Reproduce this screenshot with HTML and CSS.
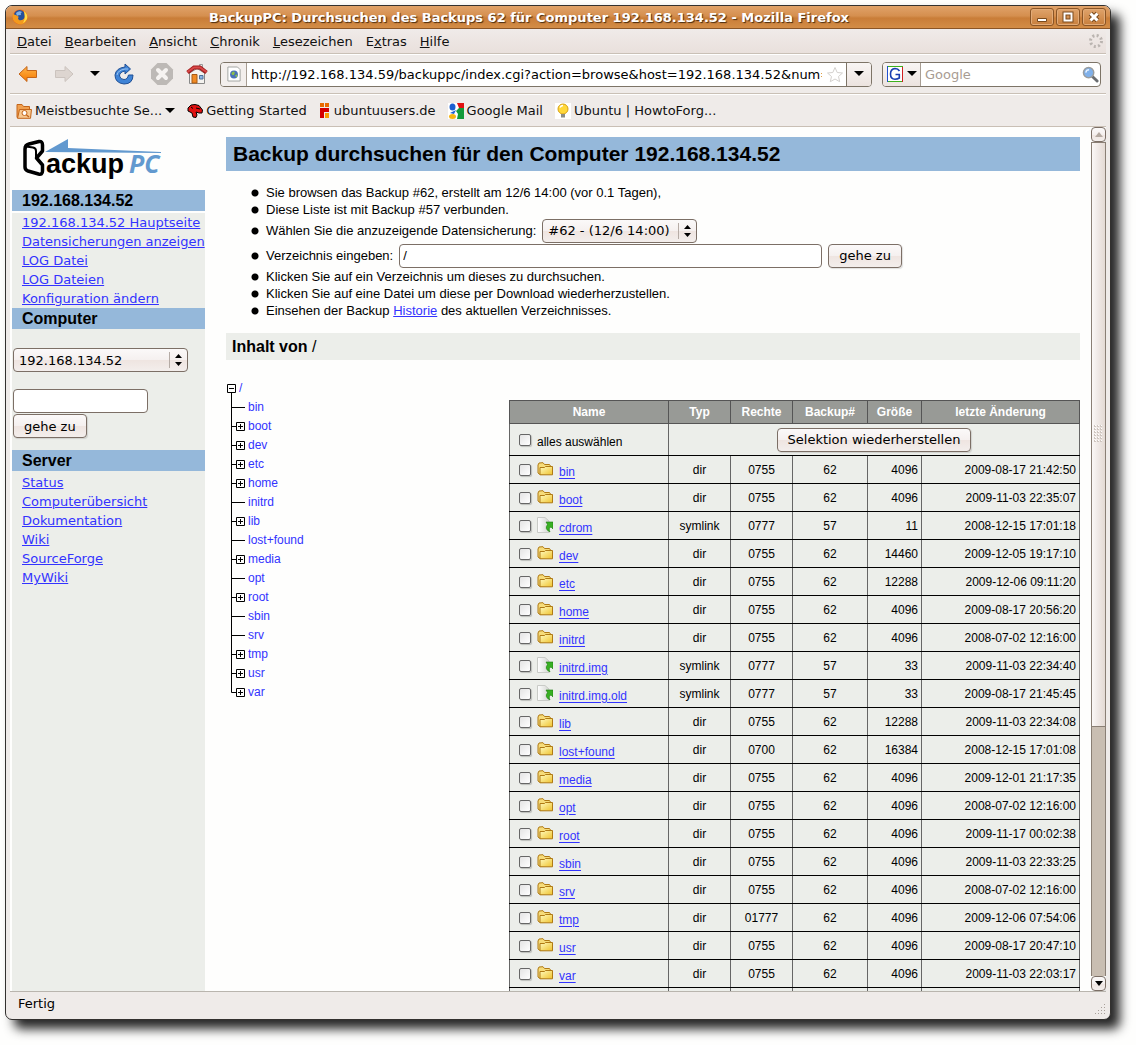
FILE: index.html
```html
<!DOCTYPE html>
<html lang="de">
<head>
    <meta charset="UTF-8">
    <meta name="viewport" content="width=device-width, initial-scale=1.0">
    <title>BackupPC: Durchsuchen des Backups 62 für Computer 192.168.134.52</title>
    <link rel="stylesheet" href="styles.css">
</head>
<body>

    <!-- shared icons -->
    <svg class="sprite" width="0" height="0" aria-hidden="true">
        <defs>
            <linearGradient id="gold" x1="0" y1="0" x2="1" y2="1">
                <stop offset="0" stop-color="#fffbc0"/>
                <stop offset="1" stop-color="#efc22c"/>
            </linearGradient>
            <linearGradient id="orange" x1="0" y1="0" x2="0" y2="1">
                <stop offset="0" stop-color="#ffb54a"/>
                <stop offset="1" stop-color="#f57900"/>
            </linearGradient>
            <linearGradient id="page" x1="0" y1="0" x2="1" y2="0">
                <stop offset="0" stop-color="#ffffff"/>
                <stop offset="1" stop-color="#d4d6d2"/>
            </linearGradient>
        </defs>
        <symbol id="folder" viewBox="0 0 16 14">
            <path d="M1 3 L2 1 L6 .7 L7.5 2.5 L12.5 2.5 L13.5 4 L13.5 11 L3 12.5 L1 11Z" fill="#f6dc7a" stroke="#b07a14"/>
            <path d="M3 12.8 L3 5.5 L7.5 5.5 L8.5 4.5 L15.5 4.5 L15.5 12.8Z" fill="url(#gold)" stroke="#b07a14"/>
        </symbol>
        <symbol id="symlink" viewBox="0 0 16 16">
            <path d="M.5 .5 H8 L12 4 V15.5 H.5Z" fill="url(#page)" stroke="#c9cbc7"/>
            <path d="M9 5 H16 V12 L14 10 Q11 11 13 15 Q7 12 10.5 7.5Z" fill="#38b022" stroke="#1c7a10" stroke-width=".6"/>
        </symbol>
        <symbol id="leaf" viewBox="0 0 21 19">
            <path d="M5.5 0 V19 M5 9.5 H19" stroke="#000" fill="none"/>
        </symbol>
        <symbol id="plus" viewBox="0 0 21 19">
            <path d="M5.5 0 V19 M5 9.5 H10" stroke="#000" fill="none"/>
            <path d="M10.500 5.500 H18.500 V13.500 H10.500Z M12 9.500 H17 M14.500 7 V12" stroke="#000" fill="none"/>
        </symbol>
        <symbol id="plus-last" viewBox="0 0 21 19">
            <path d="M5.5 0 V9.500 H10" stroke="#000" fill="none"/>
            <path d="M10.500 5.500 H18.500 V13.500 H10.500Z M12 9.500 H17 M14.500 7 V12" stroke="#000" fill="none"/>
        </symbol>
        <symbol id="minus" viewBox="0 0 12 19">
            <path d="M1.500 5.500 H9.500 V13.500 H1.500Z M3 9.500 H8 M5.500 14 V19" stroke="#000" fill="none"/>
        </symbol>
        <symbol id="caret" viewBox="0 0 10 6">
            <path d="M0 0 H10 L5 5Z" fill="#000"/>
        </symbol>
    </svg>

    <div class="window">
        <header class="titlebar">
            <svg class="firefox" viewBox="0 0 16 16" width="16" height="16">
                <circle cx="8" cy="8" r="7.500" fill="#e8661a"/>
                <circle cx="7.500" cy="6.500" r="5.500" fill="#24509c"/>
                <path d="M4 4 Q7 1 10 3 Q8 4 9 6 Q6 6 5 7Z" fill="#7fb0e4"/>
                <path d="M1 3 Q1 6 4 6 L7 8 Q5 9 7 11 Q11 12 13 8 Q13 4 11 1 Q16 4 15.500 9 Q14 15 8 15.500 Q1 14 .5 8Z" fill="#f39a1e"/>
                <path d="M12 2 Q16 5 15 10 Q13 13 11 14 Q14 9 12 2Z" fill="#ffdc4a"/>
            </svg>
            <div class="caption">BackupPC: Durchsuchen des Backups 62 für Computer 192.168.134.52 - Mozilla Firefox</div>
            <div class="window-buttons">
                <button aria-label="Minimieren"><svg viewBox="0 0 12 12" width="12" height="12"><path d="M1.500 7.500 H10.500 V10.500 H1.500Z" fill="#fff" stroke="#7a4a1c"/></svg></button>
                <button aria-label="Maximieren"><svg viewBox="0 0 12 12" width="12" height="12"><path d="M2.500 2.500 H9.500 V9.500 H2.500Z" fill="none" stroke="#7a4a1c" stroke-width="4"/><path d="M2.500 2.500 H9.500 V9.500 H2.500Z" fill="none" stroke="#fff" stroke-width="2"/></svg></button>
                <button aria-label="Schließen"><svg viewBox="0 0 12 12" width="12" height="12"><path d="M2.500 2.500 L9.500 9.500 M9.500 2.500 L2.500 9.500" stroke="#7a4a1c" stroke-width="5"/><path d="M2.500 2.500 L9.500 9.500 M9.500 2.500 L2.500 9.500" stroke="#fff" stroke-width="3"/></svg></button>
            </div>
        </header>

        <nav class="menubar">
            <a href="#"><u>D</u>atei</a>
            <a href="#"><u>B</u>earbeiten</a>
            <a href="#"><u>A</u>nsicht</a>
            <a href="#"><u>C</u>hronik</a>
            <a href="#"><u>L</u>esezeichen</a>
            <a href="#">E<u>x</u>tras</a>
            <a href="#"><u>H</u>ilfe</a>
            <svg class="throbber" viewBox="0 0 14 14" width="14" height="14">
                <circle cx="7" cy="7" r="5.500" fill="none" stroke="#bab4b0" stroke-width="3" stroke-dasharray="2 2.320"/>
            </svg>
        </nav>

        <div class="toolbar">
            <button class="tool" aria-label="Zurück"><svg viewBox="0 0 20 18" width="20" height="18"><path d="M1 9 L9 1.500 V5.500 H18.500 V12.500 H9 V16.500Z" fill="url(#orange)" stroke="#c4651a" stroke-linejoin="round"/></svg></button>
            <button class="tool" aria-label="Vor"><svg viewBox="0 0 20 18" width="20" height="18"><path d="M19 9 L11 1.500 V5.500 H1.500 V12.500 H11 V16.500Z" fill="#ddd5d0" stroke="#cbc3be" stroke-linejoin="round"/></svg></button>
            <button class="tool drop" aria-label="Verlauf"><svg width="10" height="6"><use href="#caret"/></svg></button>
            <button class="tool" aria-label="Neu laden"><svg viewBox="0 0 20 22" width="20" height="22"><path d="M11 1 L16.500 6 L11 11 V8 Q5.500 9 5.500 13 Q6.500 16.500 10 16.500 Q13.500 16.500 14.500 12 L19 12 Q19 21 10 21 Q1 20 1 12 Q2 5 11 4Z" fill="#3f83d6" stroke="#1f4f94" stroke-linejoin="round"/><path d="M3 12 Q4 7 11 6 L14 6" fill="none" stroke="#9cc4f0"/></svg></button>
            <button class="tool" aria-label="Stopp"><svg viewBox="0 0 24 24" width="24" height="24"><path d="M7.500 1 H16.500 L23 7.500 V16.500 L16.500 23 H7.500 L1 16.500 V7.500Z" fill="#bdb9b6"/><path d="M8 8 L16 16 M16 8 L8 16" stroke="#f6f3f1" stroke-width="4" stroke-linecap="round"/></svg></button>
            <button class="tool" aria-label="Startseite"><svg viewBox="0 0 22 22" width="22" height="22"><path d="M13.500 1.500 H16.500 V7 H13.500Z" fill="#eee" stroke="#999"/><path d="M3.500 10 L11 5.500 L18.500 10 V20.500 H3.500Z" fill="#f4f2ef" stroke="#888"/><path d="M6 11.500 H11 V20 H6Z" fill="#f08a24" stroke="#a85a14"/><path d="M13.500 12.500 H17 V16 H13.500Z" fill="#8ab6e6" stroke="#4d6f99"/><path d="M1.500 9.500 L8 4.500 H14 L20.500 9.500" fill="none" stroke="#a01c1c" stroke-width="4"/><path d="M1.500 9 L8 4.500 H14 L20.500 9" fill="none" stroke="#d84848" stroke-width="2"/></svg></button>

            <div class="urlbox">
                <span class="site-icon"><svg viewBox="0 0 16 18" width="14" height="16"><path d="M1 1 H12 L15 4 V17 H1Z" fill="#fff" stroke="#999c98"/><circle cx="8" cy="9.500" r="4.500" fill="#4a72b8"/><path d="M5 8 Q7 5 9 7 L8 10 L6 10Z M9 11 L12 9 L11 13Z" fill="#8cbf4a"/></svg></span>
                <input type="text" aria-label="Adresse" value="http://192.168.134.59/backuppc/index.cgi?action=browse&amp;host=192.168.134.52&amp;num=62&amp;share=/">
                <svg class="star" viewBox="0 0 18 17" width="18" height="17"><path d="M9 1.500 L11.200 6.500 L16.500 7 L12.500 10.500 L13.700 15.700 L9 13 L4.300 15.700 L5.500 10.500 L1.500 7 L6.800 6.500Z" fill="#fff" stroke="#d3d0cd"/></svg>
                <button aria-label="Adressliste"><svg width="10" height="6"><use href="#caret"/></svg></button>
            </div>

            <div class="searchbox">
                <button aria-label="Suchmaschine">
                    <svg viewBox="0 0 16 16" width="16" height="16"><path d="M0 0 H16 V16 H0Z" fill="#fff"/><path d="M0 .5 H16 M0 15.500 H15" stroke="#3cb01c"/><path d="M.5 0 V16" stroke="#2050d0"/><path d="M15.500 1 V16" stroke="#d02020"/><path d="M12.500 5 Q11 2.500 8 2.500 Q3.500 3 3.500 8 Q3.500 13 8 13.300 Q10.500 13.300 12.300 12 V8.500 H8.500" fill="none" stroke="#1a3fb0" stroke-width="1.600"/></svg>
                    <svg width="10" height="6"><use href="#caret"/></svg>
                </button>
                <input type="text" aria-label="Suche" placeholder="Google">
                <svg class="glass" viewBox="0 0 18 18" width="17" height="17"><path d="M11 11 L16 16" stroke="#6a6d70" stroke-width="3" stroke-linecap="round"/><circle cx="7" cy="7" r="5.500" fill="#7fb0ea" stroke="#9a9d9f" stroke-width="1.500"/><path d="M4 7 Q4.500 4 7.500 4" fill="none" stroke="#e4f0ff" stroke-width="1.500"/></svg>
            </div>
        </div>

        <nav class="bookmarks">
            <a href="#">
                <svg viewBox="0 0 16 16" width="16" height="16"><path d="M1 1.500 H6 L7.500 3.500 H13.500 V14.500 H1Z" fill="#f0a050" stroke="#c4651a"/><path d="M3.500 6.500 H15.500 L14.500 15.300 H1.500Z" fill="#f8c890" stroke="#c4651a"/><circle cx="8.500" cy="10" r="2.500" fill="#fff" stroke="#c4651a"/><path d="M10.500 12 L13 14" stroke="#c4651a" stroke-width="1.500"/></svg>
                Meistbesuchte Se...
                <svg width="10" height="6"><use href="#caret"/></svg>
            </a>
            <a href="#">
                <svg viewBox="0 0 16 14" width="16" height="14"><path d="M1 4 L4 1 L8 .5 L12 1.500 L15.500 6 L15 9 L12 9 L9 8 L10 11 L9 13.500 L6 13 L5 9 L1 7Z" fill="#e01010" stroke="#000"/><path d="M4 3 L6 4.500 M9 4 L13 5" stroke="#000"/></svg>
                Getting Started
            </a>
            <a href="#">
                <svg viewBox="0 0 12 16" width="12" height="16"><path d="M1 0 H5 V4 H1Z M6 0 H10 V4 H6Z" fill="#e96a00"/><path d="M1 5 H10 V9 H5 V15 H1Z" fill="#d40000"/><path d="M6 10 H10 V15 H6Z" fill="#f99b00"/></svg>
                ubuntuusers.de
            </a>
            <a href="#">
                <svg viewBox="0 0 16 16" width="16" height="16"><path d="M0 0 H16 V16 H0Z" fill="#fff"/><path d="M9 0 H16 V5 H11Z" fill="#e01010"/><path d="M11 5 H16 V16 H9 L10 11 L8 8Z" fill="#129a3a"/><ellipse cx="4.500" cy="4" rx="3" ry="3.500" fill="#1c5fd0"/><path d="M2 10 L8 7 L6 11Z" fill="#1c5fd0"/><ellipse cx="4.500" cy="13.500" rx="3.500" ry="2.500" fill="#f7b512"/></svg>
                Google Mail
            </a>
            <a href="#">
                <svg viewBox="0 0 16 16" width="16" height="16"><path d="M0 0 H16 V16 H0Z" fill="#fff"/><circle cx="8" cy="6" r="5" fill="#ffd83a" stroke="#d8a012"/><path d="M5 4.500 Q6 2.500 8 2.500" fill="none" stroke="#fff" stroke-width="1.500"/><path d="M6 11 H10 V14.500 H6Z" fill="#8a8c88"/></svg>
                Ubuntu | HowtoForg...
            </a>
        </nav>

        <div class="viewport">
            <aside class="sidebar">
                <svg class="logo" viewBox="0 0 142 44" width="142" height="44" role="img" aria-label="BackupPC">
                    <path d="M23 15 L46 2 V11 L139 15 V16Z" fill="#6299cf"/>
                    <path d="M3 30 V12 Q3 8 7 7 L17 4.500 Q20.500 4 20.500 8 V14 L14.500 21 L20.500 28 V34 Q20.500 38 16.500 37 L6 34 Q3 33 3 30Z" fill="#fff" stroke="#000" stroke-width="3.500" stroke-linejoin="round"/>
                    <path d="M4 9.500 L11 10.500 Q14 11 14 14 V21" fill="none" stroke="#000" stroke-width="2"/>
                    <text x="24" y="36" class="logo-ackup">ackup</text>
                    <text x="107" y="36" class="logo-pc">PC</text>
                </svg>
                <h2 class="host">192.168.134.52</h2>
                <div class="panel">
                    <ul class="links">
                        <li><a href="#">192.168.134.52 Hauptseite</a></li>
                        <li><a href="#">Datensicherungen anzeigen</a></li>
                        <li><a href="#">LOG Datei</a></li>
                        <li><a href="#">LOG Dateien</a></li>
                        <li><a href="#">Konfiguration ändern</a></li>
                    </ul>
                    <h2>Computer</h2>
                    <form class="host-form">
                        <select aria-label="Computer">
                            <option>192.168.134.52</option>
                        </select>
                        <input type="text" aria-label="Computername">
                        <button type="button">gehe zu</button>
                    </form>
                    <h2>Server</h2>
                    <ul class="links">
                        <li><a href="#">Status</a></li>
                        <li><a href="#">Computerübersicht</a></li>
                        <li><a href="#">Dokumentation</a></li>
                        <li><a href="#">Wiki</a></li>
                        <li><a href="#">SourceForge</a></li>
                        <li><a href="#">MyWiki</a></li>
                    </ul>
                </div>
            </aside>

            <main class="content">
                <h1>Backup durchsuchen für den Computer 192.168.134.52</h1>

                <ul class="notes">
                    <li>Sie browsen das Backup #62, erstellt am 12/6 14:00 (vor 0.1 Tagen),</li>
                    <li>Diese Liste ist mit Backup #57 verbunden.</li>
                    <li class="field">
                        <label for="backup">Wählen Sie die anzuzeigende Datensicherung:</label>
                        <select id="backup">
                            <option>#62 - (12/6 14:00)</option>
                        </select>
                    </li>
                    <li class="field">
                        <label for="dir">Verzeichnis eingeben:</label>
                        <input type="text" id="dir" value="/">
                        <button type="button">gehe zu</button>
                    </li>
                    <li>Klicken Sie auf ein Verzeichnis um dieses zu durchsuchen.</li>
                    <li>Klicken Sie auf eine Datei um diese per Download wiederherzustellen.</li>
                    <li>Einsehen der Backup <a href="#">Historie</a> des aktuellen Verzeichnisses.</li>
                </ul>

                <h3>Inhalt von <span>/</span></h3>

                <div class="browser">
                    <ul class="tree">
                        <li><svg width="12" height="19"><use href="#minus"/></svg><a href="#">/</a></li>
                        <li><svg width="21" height="19"><use href="#leaf"/></svg><a href="#">bin</a></li>
                        <li><svg width="21" height="19"><use href="#plus"/></svg><a href="#">boot</a></li>
                        <li><svg width="21" height="19"><use href="#plus"/></svg><a href="#">dev</a></li>
                        <li><svg width="21" height="19"><use href="#plus"/></svg><a href="#">etc</a></li>
                        <li><svg width="21" height="19"><use href="#plus"/></svg><a href="#">home</a></li>
                        <li><svg width="21" height="19"><use href="#leaf"/></svg><a href="#">initrd</a></li>
                        <li><svg width="21" height="19"><use href="#plus"/></svg><a href="#">lib</a></li>
                        <li><svg width="21" height="19"><use href="#leaf"/></svg><a href="#">lost+found</a></li>
                        <li><svg width="21" height="19"><use href="#plus"/></svg><a href="#">media</a></li>
                        <li><svg width="21" height="19"><use href="#leaf"/></svg><a href="#">opt</a></li>
                        <li><svg width="21" height="19"><use href="#plus"/></svg><a href="#">root</a></li>
                        <li><svg width="21" height="19"><use href="#leaf"/></svg><a href="#">sbin</a></li>
                        <li><svg width="21" height="19"><use href="#leaf"/></svg><a href="#">srv</a></li>
                        <li><svg width="21" height="19"><use href="#plus"/></svg><a href="#">tmp</a></li>
                        <li><svg width="21" height="19"><use href="#plus"/></svg><a href="#">usr</a></li>
                        <li><svg width="21" height="19"><use href="#plus-last"/></svg><a href="#">var</a></li>
                    </ul>

                    <table class="files">
                        <colgroup>
                            <col class="c-name"><col class="c-type"><col class="c-mode"><col class="c-backup"><col class="c-size"><col>
                        </colgroup>
                        <thead>
                            <tr><th>Name</th><th>Typ</th><th>Rechte</th><th>Backup#</th><th>Größe</th><th>letzte Änderung</th></tr>
                        </thead>
                        <tbody>
                            <tr class="all">
                                <td><div class="entry"><input type="checkbox" id="all"><label for="all">alles auswählen</label></div></td>
                                <td colspan="5"><button type="button">Selektion wiederherstellen</button></td>
                            </tr>
                            <tr><td><div class="entry"><input type="checkbox" aria-label="bin"><svg width="16" height="14"><use href="#folder"/></svg><a href="#">bin</a></div></td><td>dir</td><td>0755</td><td>62</td><td>4096</td><td>2009-08-17 21:42:50</td></tr>
                            <tr><td><div class="entry"><input type="checkbox" aria-label="boot"><svg width="16" height="14"><use href="#folder"/></svg><a href="#">boot</a></div></td><td>dir</td><td>0755</td><td>62</td><td>4096</td><td>2009-11-03 22:35:07</td></tr>
                            <tr><td><div class="entry"><input type="checkbox" aria-label="cdrom"><svg width="16" height="16"><use href="#symlink"/></svg><a href="#">cdrom</a></div></td><td>symlink</td><td>0777</td><td>57</td><td>11</td><td>2008-12-15 17:01:18</td></tr>
                            <tr><td><div class="entry"><input type="checkbox" aria-label="dev"><svg width="16" height="14"><use href="#folder"/></svg><a href="#">dev</a></div></td><td>dir</td><td>0755</td><td>62</td><td>14460</td><td>2009-12-05 19:17:10</td></tr>
                            <tr><td><div class="entry"><input type="checkbox" aria-label="etc"><svg width="16" height="14"><use href="#folder"/></svg><a href="#">etc</a></div></td><td>dir</td><td>0755</td><td>62</td><td>12288</td><td>2009-12-06 09:11:20</td></tr>
                            <tr><td><div class="entry"><input type="checkbox" aria-label="home"><svg width="16" height="14"><use href="#folder"/></svg><a href="#">home</a></div></td><td>dir</td><td>0755</td><td>62</td><td>4096</td><td>2009-08-17 20:56:20</td></tr>
                            <tr><td><div class="entry"><input type="checkbox" aria-label="initrd"><svg width="16" height="14"><use href="#folder"/></svg><a href="#">initrd</a></div></td><td>dir</td><td>0755</td><td>62</td><td>4096</td><td>2008-07-02 12:16:00</td></tr>
                            <tr><td><div class="entry"><input type="checkbox" aria-label="initrd.img"><svg width="16" height="16"><use href="#symlink"/></svg><a href="#">initrd.img</a></div></td><td>symlink</td><td>0777</td><td>57</td><td>33</td><td>2009-11-03 22:34:40</td></tr>
                            <tr><td><div class="entry"><input type="checkbox" aria-label="initrd.img.old"><svg width="16" height="16"><use href="#symlink"/></svg><a href="#">initrd.img.old</a></div></td><td>symlink</td><td>0777</td><td>57</td><td>33</td><td>2009-08-17 21:45:45</td></tr>
                            <tr><td><div class="entry"><input type="checkbox" aria-label="lib"><svg width="16" height="14"><use href="#folder"/></svg><a href="#">lib</a></div></td><td>dir</td><td>0755</td><td>62</td><td>12288</td><td>2009-11-03 22:34:08</td></tr>
                            <tr><td><div class="entry"><input type="checkbox" aria-label="lost+found"><svg width="16" height="14"><use href="#folder"/></svg><a href="#">lost+found</a></div></td><td>dir</td><td>0700</td><td>62</td><td>16384</td><td>2008-12-15 17:01:08</td></tr>
                            <tr><td><div class="entry"><input type="checkbox" aria-label="media"><svg width="16" height="14"><use href="#folder"/></svg><a href="#">media</a></div></td><td>dir</td><td>0755</td><td>62</td><td>4096</td><td>2009-12-01 21:17:35</td></tr>
                            <tr><td><div class="entry"><input type="checkbox" aria-label="opt"><svg width="16" height="14"><use href="#folder"/></svg><a href="#">opt</a></div></td><td>dir</td><td>0755</td><td>62</td><td>4096</td><td>2008-07-02 12:16:00</td></tr>
                            <tr><td><div class="entry"><input type="checkbox" aria-label="root"><svg width="16" height="14"><use href="#folder"/></svg><a href="#">root</a></div></td><td>dir</td><td>0755</td><td>62</td><td>4096</td><td>2009-11-17 00:02:38</td></tr>
                            <tr><td><div class="entry"><input type="checkbox" aria-label="sbin"><svg width="16" height="14"><use href="#folder"/></svg><a href="#">sbin</a></div></td><td>dir</td><td>0755</td><td>62</td><td>4096</td><td>2009-11-03 22:33:25</td></tr>
                            <tr><td><div class="entry"><input type="checkbox" aria-label="srv"><svg width="16" height="14"><use href="#folder"/></svg><a href="#">srv</a></div></td><td>dir</td><td>0755</td><td>62</td><td>4096</td><td>2008-07-02 12:16:00</td></tr>
                            <tr><td><div class="entry"><input type="checkbox" aria-label="tmp"><svg width="16" height="14"><use href="#folder"/></svg><a href="#">tmp</a></div></td><td>dir</td><td>01777</td><td>62</td><td>4096</td><td>2009-12-06 07:54:06</td></tr>
                            <tr><td><div class="entry"><input type="checkbox" aria-label="usr"><svg width="16" height="14"><use href="#folder"/></svg><a href="#">usr</a></div></td><td>dir</td><td>0755</td><td>62</td><td>4096</td><td>2009-08-17 20:47:10</td></tr>
                            <tr><td><div class="entry"><input type="checkbox" aria-label="var"><svg width="16" height="14"><use href="#folder"/></svg><a href="#">var</a></div></td><td>dir</td><td>0755</td><td>62</td><td>4096</td><td>2009-11-03 22:03:17</td></tr>
                            <tr><td></td><td></td><td></td><td></td><td></td><td></td></tr>
                        </tbody>
                    </table>
                </div>
            </main>

            <div class="scrollbar">
                <button aria-label="Nach oben"><svg viewBox="0 0 8 5" width="8" height="5"><path d="M0 5 H8 L4 0Z" fill="#b5aaa2"/></svg></button>
                <div class="thumb">
                    <svg viewBox="0 0 9 18" width="9" height="18"><path d="M1 0V18M4 0V18M7 0V18" stroke="#cfc6c0" stroke-width="2" stroke-dasharray="2 1"/><path d="M1.500 0V18M4.500 0V18M7.500 0V18" stroke="#fff" stroke-dasharray="1 2"/></svg>
                </div>
                <div class="trough"></div>
                <button aria-label="Nach unten"><svg viewBox="0 0 8 5" width="8" height="5"><path d="M0 0 H8 L4 5Z" fill="#000"/></svg></button>
            </div>
        </div>

        <footer class="statusbar">
            <span>Fertig</span>
            <svg viewBox="0 0 12 12" width="12" height="12"><path d="M10 1h1v1h-1z M10 4h1v1h-1z M7 4h1v1h-1z M10 7h1v1h-1z M7 7h1v1h-1z M4 7h1v1h-1z M10 10h1v1h-1z M7 10h1v1h-1z M4 10h1v1h-1z M1 10h1v1h-1z" fill="#a8a09a"/></svg>
        </footer>
    </div>

</body>
</html>
```
FILE: styles.css
```css
* {
    box-sizing: border-box;
}
body {
    margin: 0;
    height: 100vh;
    padding: 5px 25px 25px 5px;
    background: #fefefd;
    color: #000;
    font-family: "DejaVu Sans", sans-serif;
    font-size: 13px;
}
svg {
    flex: none;
    display: block;
}
.sprite {
    position: absolute;
}
button, input, select {
    font-family: inherit;
    font-size: 13px;
    color: #000;
    margin: 0;
}

/* browser window */
.window {
    height: 100%;
    display: flex;
    flex-direction: column;
    overflow: hidden;
    background: #efebe9;
    border: 1px solid #33312f;
    border-radius: 7px;
    box-shadow: 9px 9px 11px rgba(0, 0, 0, 0.85);
}
.titlebar {
    height: 23px;
    flex: none;
    display: flex;
    align-items: center;
    padding: 0 4px 0 6px;
    background: linear-gradient(#e0a269, #d58f4f 45%, #c97d38 55%, #d38d47);
    border-bottom: 1px solid #8a5526;
}
.caption {
    flex: 1;
    text-align: center;
    font-weight: bold;
    color: #fff;
    text-shadow: 1px 1px 1px #4a2c10;
    white-space: nowrap;
    overflow: hidden;
}
.window-buttons {
    display: flex;
    gap: 2px;
}
.window-buttons button {
    width: 24px;
    height: 18px;
    padding: 0;
    display: flex;
    align-items: center;
    justify-content: center;
    background: linear-gradient(#dfa36b, #c87f3c);
    border: 1px solid #8a5526;
    border-radius: 3px;
    box-shadow: inset 0 0 0 1px #e2ab78;
}
.menubar {
    height: 25px;
    flex: none;
    display: flex;
    align-items: center;
    gap: 13px;
    margin: 0 4px;
    padding: 0 3px 0 7px;
    background: linear-gradient(#f0ebe9, #e9e0dc);
    border-bottom: 1px solid #c9c0b6;
}
.menubar a, .bookmarks a {
    color: #111;
    text-decoration: none;
}
.throbber {
    margin-left: auto;
}
.toolbar {
    height: 40px;
    flex: none;
    display: flex;
    align-items: center;
    margin: 0 4px;
    padding: 0 5px 0 8px;
    border-top: 1px solid #fff;
    border-bottom: 1px solid #c9c0b6;
}
.tool {
    padding: 0;
    margin-right: 16px;
    border: 0;
    background: none;
}
.tool.drop {
    margin-right: 14px;
}
.tool:nth-child(5), .tool:nth-child(6) {
    margin-right: 12px;
}
.urlbox, .searchbox {
    height: 25px;
    display: flex;
    align-items: center;
    overflow: hidden;
    background: #fff;
    border: 1px solid #7d7467;
    border-radius: 4px;
}
.urlbox {
    flex: 1;
    min-width: 0;
    margin-right: 10px;
}
.searchbox {
    width: 219px;
}
.urlbox input, .searchbox input {
    flex: 1;
    min-width: 0;
    border: 0;
    padding: 0;
    margin-left: 4px;
    background: none;
    outline: none;
}
.searchbox input::placeholder {
    color: #a89c92;
}
.site-icon {
    width: 26px;
    height: 23px;
    display: flex;
    align-items: center;
    justify-content: center;
    background: #f3efed;
    border-right: 1px solid #a79d93;
}
.star {
    margin: 0 2px 0 4px;
}
.urlbox button, .searchbox button {
    height: 23px;
    display: flex;
    align-items: center;
    justify-content: center;
    gap: 4px;
    padding: 0;
    border: 0;
    background: linear-gradient(#f8f5f4, #ece3df);
}
.urlbox button {
    width: 25px;
    border-left: 1px solid #7d7467;
}
.searchbox button {
    width: 38px;
    border-right: 1px solid #a79d93;
}
.glass {
    margin-right: 1px;
}
.bookmarks {
    height: 33px;
    flex: none;
    display: flex;
    align-items: center;
    gap: 12px;
    margin: 0 4px;
    padding: 0 6px;
    border-top: 1px solid #fff;
    border-bottom: 1px solid #c9bfb5;
}
.bookmarks a {
    display: flex;
    align-items: center;
    gap: 3px;
    white-space: nowrap;
}

/* page inside the window */
.viewport {
    flex: 1;
    min-height: 0;
    display: flex;
    overflow: hidden;
    margin: 0 4px;
    padding-left: 2px;
    background: #fefefd;
    border-bottom: 1px solid #b9b5ae;
}
.sidebar {
    width: 193px;
    flex: none;
    display: flex;
    flex-direction: column;
}
.logo {
    margin: 10px 0 9px 10px;
}
.logo-ackup {
    font: bold 27px "Liberation Sans", sans-serif;
}
.logo-pc {
    font: italic bold 25px "Open Sans", sans-serif;
    fill: #6299cf;
}
.sidebar h2 {
    margin: 0;
    padding-left: 10px;
    font: bold 16px/21px "Liberation Sans", sans-serif;
    background: #95b8da;
}
.sidebar .host {
    margin-bottom: 2px;
}
.panel {
    flex: 1;
    background: #eceeea;
}
.links {
    list-style: none;
    margin: 0;
    padding: 0 0 0 10px;
    line-height: 19px;
    white-space: nowrap;
}
h2 + .links {
    padding-top: 2px;
}
a {
    color: #3333ff;
}
.host-form {
    display: flex;
    flex-direction: column;
    align-items: flex-start;
    padding: 19px 1px 12px;
}
.host-form select {
    width: 175px;
    margin-bottom: 17px;
}
.host-form input {
    width: 135px;
    margin-bottom: 1px;
}
.viewport select, .viewport button, .viewport input[type="text"] {
    height: 24px;
    border: 1px solid #7c6f66;
    border-radius: 4px;
}
.viewport button {
    padding: 0 10px;
    background: linear-gradient(#fbf9f9, #f5f0ef 50%, #efe5e1 52%, #f3eeec);
    box-shadow: 1px 1px 1px rgba(0, 0, 0, 0.12);
}
.viewport select {
    appearance: none;
    padding: 0 26px 0 5px;
    background:
        url("data:image/svg+xml,%3Csvg xmlns='http://www.w3.org/2000/svg' width='18' height='16'%3E%3Cpath d='M.5 0V16' stroke='%23b5aba5'/%3E%3Cpath d='M6 6L9.500 2L13 6zM6 10L9.500 14L13 10z'/%3E%3C/svg%3E") right center no-repeat,
        linear-gradient(#fbf9f9, #f5f0ef 50%, #efe5e1 52%, #f3eeec);
}
.viewport input[type="text"] {
    padding: 0 3px;
    background: #fff;
}
.content {
    flex: 1;
    min-width: 0;
    margin: 10px 11px 0 21px;
    font-family: "Liberation Sans", sans-serif;
}
h1 {
    margin: 0;
    padding-left: 7px;
    font-size: 21px;
    line-height: 34px;
    background: #95b8da;
}
.notes {
    list-style: none;
    margin: 13px 0 14px;
    padding-left: 25px;
    line-height: 17px;
}
.notes li {
    padding-left: 15px;
    background: radial-gradient(circle, #000 3px, transparent 4px) left center / 8px 8px no-repeat;
}
.notes .field {
    display: flex;
    align-items: center;
    gap: 6px;
    height: 25px;
}
.notes select, .notes button {
    font-family: "DejaVu Sans", sans-serif;
}
#dir {
    width: 423px;
    font-family: "Liberation Sans", sans-serif;
}
h3 {
    margin: 0;
    padding-left: 6px;
    font-size: 16px;
    line-height: 27px;
    background: #eceeea;
}
h3 span {
    font-weight: normal;
}
.browser {
    display: grid;
    grid-template-columns: 283px 1fr;
    font-size: 12px;
}
.tree {
    list-style: none;
    margin: 19px 0 0;
    padding: 0;
    line-height: 19px;
}
.tree li {
    display: flex;
    gap: 1px;
}
.tree a {
    text-decoration: none;
}
.files {
    width: 100%;
    margin-top: 40px;
    table-layout: fixed;
    border-collapse: collapse;
    background: #eceeea;
    align-self: start;
}
.c-name { width: 159px; }
.c-type { width: 62px; }
.c-mode { width: 62px; }
.c-backup { width: 75px; }
.c-size { width: 54px; }
.files th {
    height: 23px;
    padding: 0;
    color: #fff;
    background: #989a96;
    border: 1px solid #555;
}
.files td {
    height: 28px;
    padding: 0 3px;
    text-align: center;
    border: 1px solid #000;
    border-left-color: #666;
    border-right-color: #666;
}
.files td:nth-child(5), .files td:nth-child(6) {
    text-align: right;
}
.files .all td {
    height: 32px;
}
.entry {
    display: flex;
    align-items: center;
    padding-left: 6px;
}
.entry svg {
    margin-left: 6px;
    margin-bottom: 2px;
}
.entry a, .entry label {
    margin-left: 6px;
    padding-top: 4px;
    text-underline-offset: 2px;
}
.entry input {
    appearance: none;
    width: 12px;
    height: 12px;
    flex: none;
    background: linear-gradient(135deg, #e4e4e4, #fff);
    border: 1px solid #666;
    border-radius: 2px;
    box-shadow: 1px 1px 1px rgba(0, 0, 0, 0.2);
}
.files button {
    font-family: "DejaVu Sans", sans-serif;
}
.scrollbar {
    width: 15px;
    flex: none;
    display: flex;
    flex-direction: column;
}
.scrollbar button {
    height: 15px;
    display: flex;
    align-items: center;
    justify-content: center;
    padding: 0;
}
.thumb {
    flex: 585;
    display: flex;
    align-items: center;
    justify-content: center;
    border: 1px solid #8a7f75;
    background: linear-gradient(90deg, #fbf8f7, #efe8e5 50%, #e4dad4);
}
.trough {
    flex: 250;
    background: #c9beb2;
    border: solid #8a7f75;
    border-width: 0 1px;
}

.statusbar {
    height: 27px;
    flex: none;
    display: flex;
    align-items: center;
    justify-content: space-between;
    padding: 0 4px 4px 12px;
}
.statusbar svg {
    align-self: flex-end;
}
```
